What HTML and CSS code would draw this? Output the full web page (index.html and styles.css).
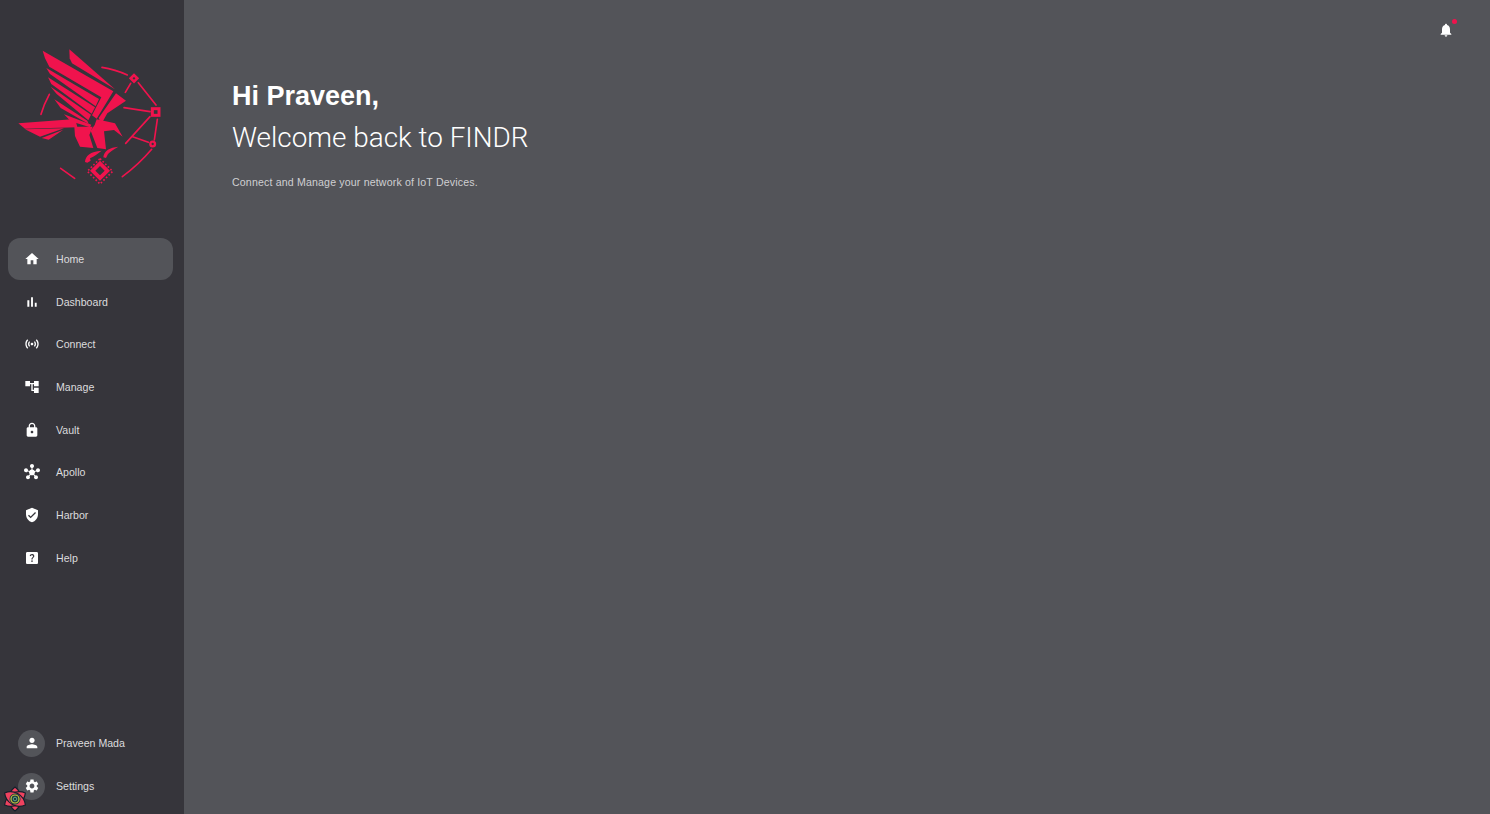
FILE: index.html
```html
<!DOCTYPE html>
<html lang="en">
<head>
    <meta charset="UTF-8">
    <meta name="viewport" content="width=device-width, initial-scale=1.0">
    <title>FINDR</title>
    <link rel="stylesheet" href="styles.css">
</head>
<body>
 <div class="app">
    <aside class="sidebar">
        <div class="logo">
            <svg class="logo-img" viewBox="0 0 552 510">
                <g fill="#f0134d">
                    <!-- upper wing -->
                    <polygon points="128,62 340,184 290,266 276,256 304,202 148,110 135,85"/>
                    <polygon points="208,58 345,178 216,100 209,85"/>
                    <polygon points="139,114 297,207 287,229 150,132"/>
                    <polygon points="144,142 285,232 275,251 154,162"/>
                    <polygon points="152,170 273,254 265,271 170,192"/>
                    <polygon points="163,208 262,272 266,282 182,234"/>
                    <polygon points="192,253 274,284 270,292 212,274"/>
                    <polygon points="348,190 378,212 322,250 304,282 296,264"/>
                    <!-- lower wing -->
                    <polygon points="55,280 226,267 232,292 150,294 75,296"/>
                    <polygon points="75,298 192,295 120,320"/>
                    <polygon points="125,324 190,299 146,329"/>
                    <!-- body and head -->
                    <polygon points="223,290 278,290 268,315 280,354 240,350 225,318"/>
                    <polygon points="290,268 345,280 368,320 342,300 312,304 318,358 292,354 272,302 284,285"/>
                    <path d="M255 396C256 378 270 364 305 362C292 372 284 378 270 385L272 392L262 398Z"/>
                    <path d="M310 382C312 362 330 352 355 350C340 358 332 364 324 372L318 384Z"/>
                    <!-- chip -->
                    <path fill-rule="evenodd" d="M300 392L330 422L300 452L270 422ZM300 408L286 422L300 436L314 422Z"/>
                </g>
                <g fill="none" stroke="#f0134d" stroke-width="5" stroke-linecap="round">
                    <path d="M306 112Q346 118 382 135"/>
                    <path d="M148 193Q132 222 123 253"/>
                    <path d="M182 415L224 445"/>
                    <path d="M367 440Q415 405 455 358"/>
                    <path d="M376 187L392 160"/>
                    <path d="M415 158L468 225"/>
                    <path d="M372 233L450 245"/>
                    <path d="M450 260L377 340"/>
                    <path d="M472 268L463 330"/>
                    <path d="M398 320L445 337"/>
                    <path d="M300 386L338 424L300 462L262 424Z" stroke-width="5" stroke-linecap="butt" stroke-dasharray="5 6"/>
                    <rect x="395" y="138" width="14" height="14" stroke-width="8" transform="rotate(45 402 145)"/>
                    <rect x="457" y="236" width="20" height="20" stroke-width="9"/>
                    <circle cx="458" cy="342" r="7" stroke-width="7"/>
                </g>
            </svg>
        </div>

        <nav class="menu">
            <a class="menu-item active"><svg class="icon" viewBox="0 0 24 24"><path d="M10 20v-6h4v6h5v-8h3L12 3 2 12h3v8z"/></svg>Home</a>
            <a class="menu-item"><svg class="icon" viewBox="0 0 24 24"><path d="M5 9.2h3V19H5zM10.6 5h2.8v14h-2.8zm5.6 8H19v6h-2.8z"/></svg>Dashboard</a>
            <a class="menu-item"><svg class="icon" viewBox="0 0 24 24"><path d="M7.76 16.24C6.67 15.16 6 13.66 6 12s.67-3.16 1.76-4.24l1.42 1.42C8.45 9.9 8 10.9 8 12c0 1.1.45 2.1 1.17 2.83l-1.41 1.41zm8.48 0C17.33 15.16 18 13.66 18 12s-.67-3.16-1.76-4.24l-1.42 1.42C15.55 9.9 16 10.9 16 12c0 1.1-.45 2.1-1.17 2.83l1.41 1.41zM12 10c-1.1 0-2 .9-2 2s.9 2 2 2 2-.9 2-2-.9-2-2-2zm8 2c0 2.21-.9 4.21-2.35 5.65l1.42 1.42C20.88 17.26 22 14.76 22 12s-1.12-5.26-2.93-7.07l-1.42 1.42C19.1 7.79 20 9.79 20 12zM6.35 6.35 4.93 4.93C3.12 6.74 2 9.24 2 12s1.12 5.26 2.93 7.07l1.42-1.42C4.9 16.21 4 14.21 4 12s.9-4.21 2.35-5.65z"/></svg>Connect</a>
            <a class="menu-item"><svg class="icon" viewBox="0 0 24 24"><path d="M22 11V3h-7v3H9V3H2v8h7V8h2v10h4v3h7v-8h-7v3h-2V8h2v3z"/></svg>Manage</a>
            <a class="menu-item"><svg class="icon" viewBox="0 0 24 24"><path d="M18 8h-1V6c0-2.76-2.24-5-5-5S7 3.24 7 6v2H6c-1.1 0-2 .9-2 2v10c0 1.1.9 2 2 2h12c1.1 0 2-.9 2-2V10c0-1.1-.9-2-2-2zm-6 9c-1.1 0-2-.9-2-2s.9-2 2-2 2 .9 2 2-.9 2-2 2zm3.1-9H8.9V6c0-1.71 1.39-3.1 3.1-3.1 1.71 0 3.1 1.39 3.1 3.1v2z"/></svg>Vault</a>
            <a class="menu-item"><svg class="icon" viewBox="0 0 24 24"><path d="M8.4 18.2c.38.5.6 1.12.6 1.8 0 1.66-1.34 3-3 3s-3-1.34-3-3 1.34-3 3-3c.44 0 .85.09 1.23.26l1.41-1.77c-.92-1.03-1.29-2.39-1.09-3.69l-2.03-.68c-.54.83-1.46 1.38-2.52 1.38-1.66 0-3-1.34-3-3s1.34-3 3-3 3 1.34 3 3c0 .07 0 .14-.01.21l2.03.68c.64-1.21 1.82-2.09 3.22-2.32V5.91C9.96 5.57 9 4.4 9 3c0-1.66 1.34-3 3-3s3 1.34 3 3c0 1.4-.96 2.57-2.25 2.91v2.16c1.4.23 2.58 1.11 3.22 2.32l2.03-.68C18 9.64 18 9.57 18 9.5c0-1.66 1.34-3 3-3s3 1.34 3 3-1.34 3-3 3c-1.06 0-1.98-.55-2.52-1.37l-2.03.68c.2 1.29-.16 2.65-1.09 3.69l1.41 1.77c.38-.17.79-.26 1.23-.26 1.66 0 3 1.34 3 3s-1.34 3-3 3-3-1.34-3-3c0-.68.22-1.3.6-1.8l-1.41-1.77c-1.35.75-3.01.76-4.38 0L8.4 18.2z"/></svg>Apollo</a>
            <a class="menu-item"><svg class="icon" viewBox="0 0 24 24"><path d="M12 1 3 5v6c0 5.55 3.84 10.74 9 12 5.16-1.26 9-6.45 9-12V5l-9-4zm-2 16-4-4 1.41-1.41L10 14.17l6.59-6.59L18 9l-8 8z"/></svg>Harbor</a>
            <a class="menu-item"><svg class="icon" viewBox="0 0 24 24"><path d="M19 3H5c-1.1 0-2 .9-2 2v14c0 1.1.9 2 2 2h14c1.1 0 2-.9 2-2V5c0-1.1-.9-2-2-2zm-6.99 15c-.7 0-1.26-.56-1.26-1.26 0-.71.56-1.25 1.26-1.25.71 0 1.25.54 1.25 1.25-.01.69-.54 1.26-1.25 1.26zm3.01-7.4c-.76 1.11-1.48 1.46-1.87 2.17-.16.29-.22.48-.22 1.41h-1.82c0-.49-.08-1.29.31-1.98.49-.87 1.42-1.39 1.96-2.16.57-.81.25-2.33-1.37-2.33-1.06 0-1.58.8-1.8 1.48l-1.65-.7C9.01 7.15 10.22 6 11.99 6c1.48 0 2.49.67 3.01 1.52.44.72.7 2.07.03 3.08z"/></svg>Help</a>
        </nav>

        <div class="menu-bottom">
            <a class="menu-item"><span class="avatar"><svg class="icon" viewBox="0 0 24 24"><path d="M12 12c2.21 0 4-1.79 4-4s-1.79-4-4-4-4 1.79-4 4 1.79 4 4 4zm0 2c-2.67 0-8 1.34-8 4v2h16v-2c0-2.66-5.33-4-8-4z"/></svg></span>Praveen Mada</a>
            <a class="menu-item"><span class="avatar"><svg class="icon" viewBox="0 0 24 24"><path d="M19.14 12.94c.04-.3.06-.61.06-.94 0-.32-.02-.64-.07-.94l2.03-1.58c.18-.14.23-.41.12-.61l-1.92-3.32c-.12-.22-.37-.29-.59-.22l-2.39.96c-.5-.38-1.03-.7-1.62-.94l-.36-2.54c-.04-.24-.24-.41-.48-.41h-3.84c-.24 0-.43.17-.47.41l-.36 2.54c-.59.24-1.13.57-1.62.94l-2.39-.96c-.22-.08-.47 0-.59.22L2.74 8.87c-.12.21-.08.47.12.61l2.03 1.58c-.05.3-.09.63-.09.94s.02.64.07.94l-2.03 1.58c-.18.14-.23.41-.12.61l1.92 3.32c.12.22.37.29.59.22l2.39-.96c.5.38 1.03.7 1.62.94l.36 2.54c.05.24.24.41.48.41h3.84c.24 0 .44-.17.47-.41l.36-2.54c.59-.24 1.13-.56 1.62-.94l2.39.96c.22.08.47 0 .59-.22l1.92-3.32c.12-.22.07-.47-.12-.61l-2.01-1.58zM12 15.6c-1.98 0-3.6-1.62-3.6-3.6s1.62-3.6 3.6-3.6 3.6 1.62 3.6 3.6-1.62 3.6-3.6 3.6z"/></svg></span>Settings</a>
        </div>
    </aside>

    <main class="content">
        <div class="topbar">
            <span class="bell">
                <svg class="icon" viewBox="0 0 24 24"><path d="M12 22c1.1 0 2-.9 2-2h-4c0 1.1.9 2 2 2zm6-6v-5c0-3.07-1.63-5.64-4.5-6.32V4c0-.83-.67-1.5-1.5-1.5s-1.5.67-1.5 1.5v.68C7.64 5.36 6 7.92 6 11v5l-2 2v1h16v-1l-2-2z"/></svg>
                <span class="bell-dot"></span>
            </span>
        </div>
        <h1 class="hello">Hi Praveen,</h1>
        <h2 class="welcome">Welcome back to FINDR</h2>
        <p class="subtitle">Connect and Manage your network of IoT Devices.</p>
    </main>
 </div>

 <!-- query devtools button -->
 <svg class="devtools" viewBox="0 0 26 26">
    <g fill="#f0425f" stroke="#14202c" stroke-width="1.2" stroke-linejoin="round">
        <path d="M13 1C21 7 21 19 13 25C5 19 5 7 13 1Z"/>
        <path d="M13 1C21 7 21 19 13 25C5 19 5 7 13 1Z" transform="rotate(60 13 13)"/>
        <path d="M13 1C21 7 21 19 13 25C5 19 5 7 13 1Z" transform="rotate(120 13 13)"/>
    </g>
    <circle cx="13" cy="13" r="5.5" fill="#1d3b3e"/>
    <circle cx="13" cy="13" r="4" fill="none" stroke="#c8c83c" stroke-width="1.2"/>
    <circle cx="13" cy="13" r="1.8" fill="none" stroke="#5fa88a" stroke-width="1"/>
 </svg>
</body>
</html>
```

FILE: styles.css
```css
* {
    box-sizing: border-box;
}

html, body {
    height: 100%;
}

body {
    margin: 0;
    background-color: #535459;
    font-family: "Liberation Sans", Arial, sans-serif;
    overflow: hidden;
}

.app {
    display: flex;
    height: 100%;
}

/* sidebar */
.sidebar {
    display: flex;
    flex-direction: column;
    flex: 0 0 184px;
    background-color: #36353b;
    padding: 0 11px 7px 8px;
}

.logo {
    height: 238px;
    padding-top: 30px;
    margin: 0 -11px 0 -8px;
}

.logo-img {
    display: block;
    width: 184px;
    height: 170px;
}

.menu {
    display: flex;
    flex-direction: column;
    gap: 0.67px;
}

.menu-bottom {
    display: flex;
    flex-direction: column;
    gap: 1px;
    margin-top: auto;
}

.menu-item {
    display: flex;
    align-items: center;
    height: 42px;
    padding-left: 16px;
    border-radius: 12px;
    font-size: 10.6px;
    color: #dcdcde;
}

.menu-item.active {
    background-color: #535459;
}

.icon {
    display: block;
    width: 16px;
    height: 16px;
    fill: #fff;
    flex: none;
}

.menu-item > .icon {
    margin-right: 16px;
}

.avatar {
    display: flex;
    align-items: center;
    justify-content: center;
    flex: none;
    width: 27px;
    height: 27px;
    margin: 0 11px 0 -6px;
    border-radius: 50%;
    background-color: #535459;
}

/* main */
.content {
    flex: 1;
    padding: 0 36px 0 48px;
}

.topbar {
    display: flex;
    justify-content: flex-end;
    padding: 22px 0 0;
    height: 78px;
}

.bell {
    position: relative;
    width: 18px;
    height: 16px;
    padding-left: 2px;
}

.bell-dot {
    position: absolute;
    top: -3px;
    right: -3px;
    width: 5px;
    height: 5px;
    border-radius: 50%;
    background-color: #f0134d;
}

.hello {
    margin: 0;
    font-size: 27px;
    line-height: 36px;
    font-weight: 700;
    color: #fff;
}

.welcome {
    margin: 6px 0 0;
    font-family: Roboto, Arial, sans-serif;
    font-size: 27.9px;
    line-height: 36px;
    font-weight: 300;
    color: #fff;
}

.subtitle {
    margin: 18px 0 0;
    font-size: 10.6px;
    line-height: 16px;
    letter-spacing: 0.16px;
    color: #cfcfd2;
}

.devtools {
    position: fixed;
    left: 2px;
    bottom: 2px;
    width: 26px;
    height: 26px;
}
```
